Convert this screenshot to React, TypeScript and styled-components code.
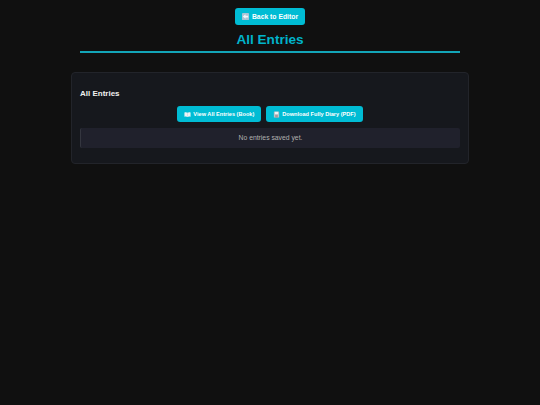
import styled, { createGlobalStyle } from 'styled-components';

const GlobalStyle = createGlobalStyle`
  html, body {
    margin: 0;
    padding: 0;
    background: #101010;
  }

  body {
    font-family: 'Liberation Sans', Arial, sans-serif;
  }
`;

const BackIcon = () => (
  <svg width="7" height="7" viewBox="0 0 16 16">
    <rect width="16" height="16" rx="2" fill="#a9c4d6" />
    <path d="M2 8l6-5v3h6v4H8v3z" fill="#f4f7fa" />
  </svg>
);

const BookIcon = () => (
  <svg width="7" height="7" viewBox="0 0 16 16">
    <path d="M1 3.500c2.500-1 5-1 7 .5 2-1.500 4.500-1.500 7-.5v9.500c-2.500-1-5-1-7 .5-2-1.500-4.500-1.500-7-.5z" fill="#eef3f6" />
    <path d="M8 4v9.500" stroke="#b8cad3" strokeWidth="1" />
  </svg>
);

const SaveIcon = () => (
  <svg width="7" height="7" viewBox="0 0 16 16">
    <rect x="2" y="1" width="12" height="14" rx="1" fill="#b9c6cc" />
    <rect x="4.500" y="2" width="7" height="5" fill="#eef2f4" />
    <rect x="5" y="9" width="6" height="6" fill="#a89a9c" />
  </svg>
);

const App = () => {
  return (
    <>
      <GlobalStyle />
      <Page>
        <BackButton>
          <BackIcon />
          Back to Editor
        </BackButton>
        <PageTitle>All Entries</PageTitle>
        <Card>
          <CardTitle>All Entries</CardTitle>
          <ActionRow>
            <ActionButton>
              <BookIcon />
              View All Entries (Book)
            </ActionButton>
            <ActionButton>
              <SaveIcon />
              Download Fully Diary (PDF)
            </ActionButton>
          </ActionRow>
          <EmptyNote>No entries saved yet.</EmptyNote>
        </Card>
      </Page>
    </>
  );
};

export default App;

const Page = styled.main`
  width: 540px;
  height: 405px;
  padding-top: 8px;
  box-sizing: border-box;
  overflow: hidden;

  display: flex;
  flex-direction: column;
  align-items: center;

  background: #101010;
`;

const BackButton = styled.button`
  width: 70px;
  height: 17px;
  padding: 0;

  display: flex;
  align-items: center;
  justify-content: center;
  column-gap: 3px;

  border: none;
  border-radius: 3px;
  background: #00bcd4;

  font-family: inherit;
  font-size: 6.800px;
  font-weight: 700;
  color: #ffffff;
`;

const PageTitle = styled.h1`
  width: 380px;
  height: 18px;
  margin: 0;
  padding: 7px 0 1px;

  border-bottom: 2px solid #13a5b8;

  font-size: 13.600px;
  font-weight: 700;
  line-height: 16px;
  text-align: center;
  color: #00b4cb;
`;

const Card = styled.section`
  width: 398px;
  height: 92px;
  margin-top: 19px;
  padding: 15px 8px 0;
  box-sizing: border-box;

  display: flex;
  flex-direction: column;

  border: 1px solid #22242a;
  border-radius: 4px;
  background: #16181d;
`;

const CardTitle = styled.h2`
  margin: 0;

  font-size: 8px;
  font-weight: 700;
  line-height: 11px;
  color: #f0f0f0;
`;

const ActionRow = styled.div`
  margin-top: 7px;

  display: flex;
  justify-content: center;
  column-gap: 5px;
`;

const ActionButton = styled.button`
  height: 16px;
  padding: 0 7px;

  display: flex;
  align-items: center;
  column-gap: 2px;

  border: none;
  border-radius: 3px;
  background: #00bcd4;

  font-family: inherit;
  font-size: 5.600px;
  font-weight: 700;
  color: #ffffff;
`;

const EmptyNote = styled.p`
  height: 20px;
  margin: 6px 0 0;

  border-left: 1px solid #34363f;
  border-radius: 2px;
  background: #20212c;

  font-size: 6.800px;
  line-height: 20px;
  text-align: center;
  color: #b0b0b0;
`;
